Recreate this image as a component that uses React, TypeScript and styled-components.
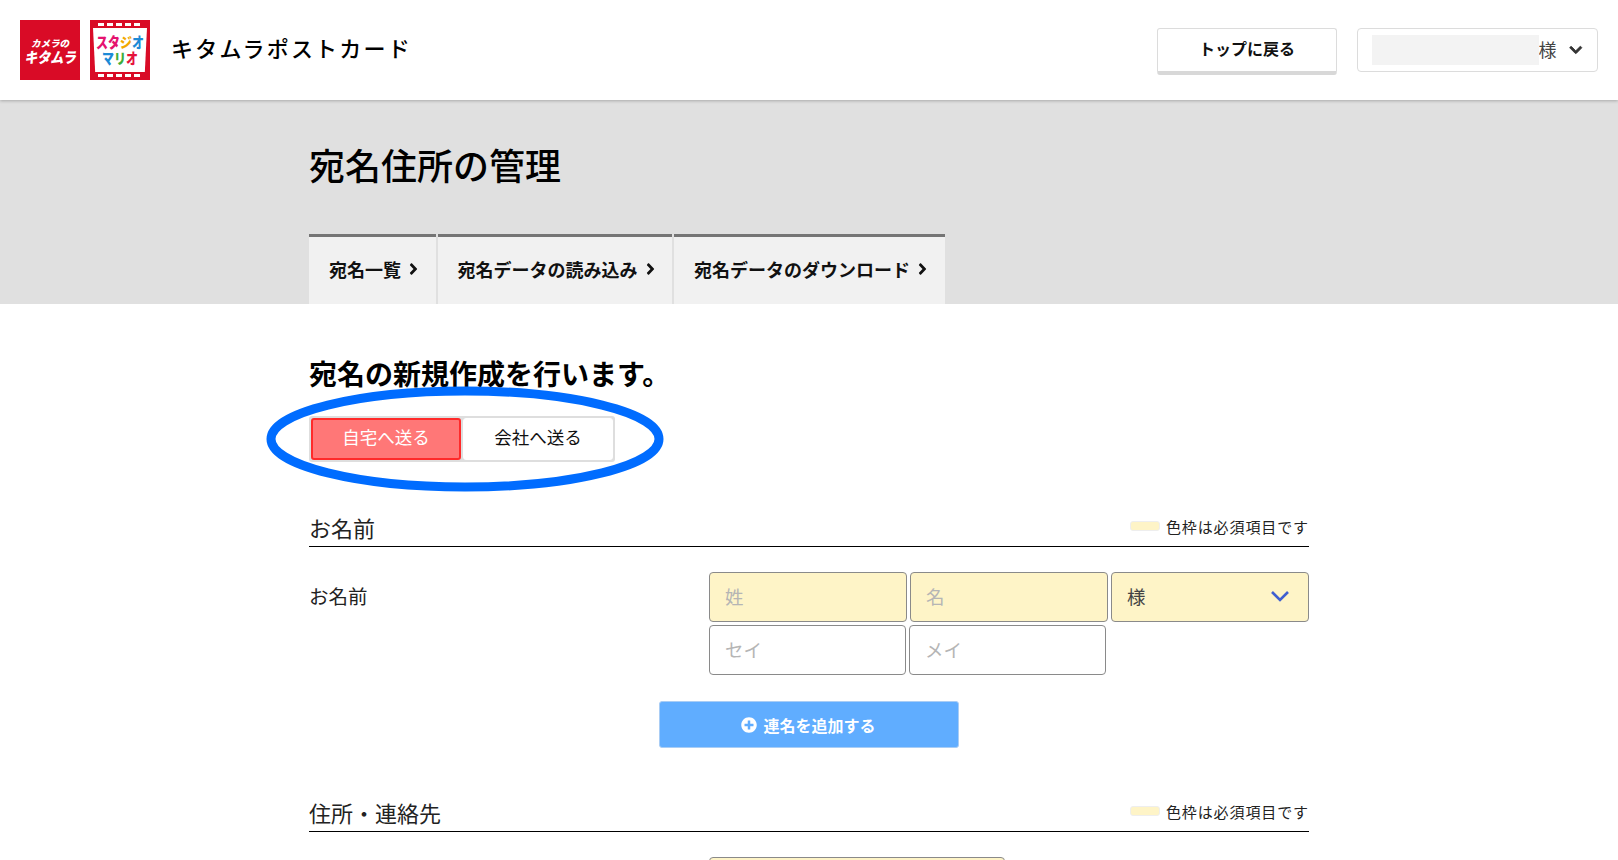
// App.tsx
import React from 'react';
import styled, { createGlobalStyle } from 'styled-components';
import { FaAngleRight, FaChevronDown, FaPlusCircle } from 'react-icons/fa';

// Constants
const COLORS = {
  RED: '#d90b26',
  BAND: '#e0e0e0',
  TAB: '#f1f1f1',
  TAB_TOP: '#757575',
  REQUIRED: '#fef4c7',
  FIELD_BORDER: '#8a8a8a',
  BLUE: '#60adff',
  ANNOTATION: '#006cff'
};

const FONT = '"Noto Sans CJK JP", "Noto Sans", sans-serif';

const GlobalStyle = createGlobalStyle`
  html, body {
    margin: 0;
    height: 860px;
    overflow: hidden;
    background: #fff;
    color: #000;
    font-family: ${FONT};
  }
  * { box-sizing: border-box; }
`;

// Header
const Header = styled.header`
  position: relative;
  z-index: 1;
  height: 100px;
  padding: 20px;
  display: flex;
  align-items: center;
  background: #fff;
  box-shadow: 0 1px 3px rgba(0, 0, 0, 0.25);
`;

const KitamuraLogo = styled.div`
  width: 60px;
  height: 60px;
  padding-top: 2px;
  background: ${COLORS.RED};
  color: #fff;
  display: flex;
  flex-direction: column;
  align-items: center;
  justify-content: center;
  font-weight: 900;
  font-style: italic;
`;

const LogoSmall = styled.span`
  font-size: 9.5px;
  line-height: 12px;
`;

const LogoLarge = styled.span`
  display: block;
  font-size: 13px;
  line-height: 16px;
  transform: scaleY(1.15);
`;

const MarioLogo = styled.div`
  width: 60px;
  height: 60px;
  margin-left: 10px;
  background: ${COLORS.RED};
  padding: 8px 3px;
  position: relative;
  display: flex;
`;

const Perforation = styled.div<{ $side: 'top' | 'bottom' }>`
  position: absolute;
  left: 8px;
  right: 8px;
  ${p => (p.$side === 'top' ? 'top: 3px;' : 'bottom: 3px;')}
  height: 3px;
  background: repeating-linear-gradient(90deg, #fff 0 6px, transparent 6px 9px);
`;

const MarioInner = styled.div`
  flex: 1;
  background: #fff;
  clip-path: polygon(0 0, 100% 0, 96% 100%, 4% 100%);
  display: flex;
  flex-direction: column;
  align-items: center;
  justify-content: center;
  font-weight: 900;
  font-size: 12px;
  line-height: 16px;
`;

const MarioLine = styled.div`
  display: flex;
`;

const MarioChar = styled.span<{ $color: string }>`
  display: block;
  color: ${p => p.$color};
  transform: scaleY(1.2);
`;

const SiteName = styled.div`
  margin-left: 21px;
  padding-bottom: 6px;
  font-size: 22px;
  font-weight: 500;
  letter-spacing: 2.2px;
`;

const HeaderRight = styled.div`
  margin-left: auto;
  display: flex;
  align-items: flex-start;
  gap: 20px;
  padding-top: 3px;
`;

const TopButton = styled.button`
  width: 180px;
  height: 47px;
  padding: 0 0 4px;
  background: #fff;
  border: 1px solid #dcdcdc;
  border-bottom: 4px solid #d8d8d8;
  border-radius: 3px;
  font-family: ${FONT};
  font-size: 16px;
  font-weight: 700;
  color: #111;
`;

const UserMenu = styled.div`
  width: 241px;
  height: 44px;
  padding: 0 14px;
  border: 1px solid #dcdcdc;
  border-radius: 4px;
  display: flex;
  align-items: center;
  color: #444;
`;

const MaskedName = styled.div`
  position: relative;
  z-index: 1;
  width: 173px;
  height: 30px;
  background: #f3f3f3;
`;

const UserSuffix = styled.span`
  margin-left: -1px;
  padding-bottom: 3px;
  font-size: 18px;
`;

const UserChevron = styled(FaChevronDown)`
  margin-left: 13px;
  width: 14px;
  height: 14px;
  color: #333;
  stroke: currentColor;
  stroke-width: 30;
`;

// Grey band
const Band = styled.section`
  height: 204px;
  background: ${COLORS.BAND};
  display: flex;
  flex-direction: column;
  justify-content: space-between;
`;

const Container = styled.div`
  width: 1000px;
  margin: 0 auto;
`;

const PageTitle = styled.h1`
  margin: 37px 0 0;
  font-size: 36px;
  line-height: 54px;
  font-weight: 500;
`;

const Tabs = styled.nav`
  display: flex;
  gap: 2px;
`;

const Tab = styled.a`
  height: 70px;
  padding: 0 15.5px 4px 20px;
  display: flex;
  align-items: center;
  gap: 6px;
  background: ${COLORS.TAB};
  border-top: 3px solid ${COLORS.TAB_TOP};
  font-size: 18px;
  font-weight: 700;
  color: #111;
`;

const TabArrow = styled(FaAngleRight)`
  width: 13px;
  height: 18px;
`;

// Form
const Heading = styled.h2`
  margin: 48px 0 0;
  font-size: 28px;
  line-height: 42px;
  font-weight: 700;
`;

const SendGroup = styled.div`
  position: relative;
  display: flex;
  width: max-content;
  margin: 22px 0 0;
  padding: 2px;
  gap: 2px;
  background: #dedede;
  border-radius: 3px;
`;

const SendButton = styled.button<{ $active?: boolean }>`
  width: 150px;
  height: 42px;
  padding: 0 0 5px;
  border-radius: 3px;
  border: ${p => (p.$active ? '2px solid #ff2a2a' : '1px solid #fff')};
  background: ${p => (p.$active ? '#ff7777' : '#fff')};
  color: ${p => (p.$active ? '#fff' : '#111')};
  font-family: ${FONT};
  font-size: 17.5px;
`;

const Annotation = styled.svg`
  position: absolute;
  left: -43px;
  top: -30px;
  width: 398px;
  height: 106px;
  pointer-events: none;
`;

const SectionHeader = styled.div<{ $first?: boolean }>`
  margin-top: ${p => (p.$first ? '48px' : '47px')};
  height: 37px;
  padding-bottom: 2px;
  display: flex;
  align-items: center;
  justify-content: space-between;
  border-bottom: 1px solid #000;
`;

const SectionTitle = styled.h3`
  margin: 0;
  font-size: 22px;
  font-weight: 400;
  color: #222;
`;

const Legend = styled.div`
  display: flex;
  align-items: center;
  gap: 6px;
  font-size: 15px;
  letter-spacing: 0.9px;
  color: #222;
  margin-bottom: 2px;
`;

const LegendSwatch = styled.span`
  width: 30px;
  height: 10px;
  border-radius: 3px;
  background: ${COLORS.REQUIRED};
  border: 1px solid #eeeeee;
`;

const FormRow = styled.div`
  display: grid;
  grid-template-columns: 400px 600px;
  margin-top: 25px;
`;

const RowLabel = styled.div`
  padding-top: 9px;
  font-size: 19.5px;
  line-height: 30px;
  color: #222;
`;

const Fields = styled.div`
  display: flex;
  flex-direction: column;
  gap: 3px;
`;

const FieldLine = styled.div`
  display: flex;
  gap: 3px;
`;

const Field = styled.div<{ $required?: boolean; $width: number }>`
  width: ${p => p.$width}px;
  height: 50px;
  padding: 0 15px 2px;
  display: flex;
  align-items: center;
  justify-content: space-between;
  border: 1px solid ${COLORS.FIELD_BORDER};
  border-radius: 4px;
  background: ${p => (p.$required ? COLORS.REQUIRED : '#fff')};
  font-size: 18.5px;
`;

const Placeholder = styled.span`
  color: #b5b5b5;
`;

const SelectValue = styled.span`
  color: #444;
`;

const SelectArrow = styled.svg`
  width: 20px;
  height: 12px;
  margin-right: 3px;
  fill: none;
  stroke: #3f5fd0;
  stroke-width: 2.6;
`;

const AddButtonRow = styled.div`
  display: flex;
  justify-content: center;
  margin-top: 26px;
`;

const AddButton = styled.button`
  width: 300px;
  height: 47px;
  margin-left: -1px;
  display: flex;
  align-items: center;
  justify-content: center;
  gap: 6px;
  border: 1px solid #a9cdf5;
  border-radius: 3px;
  background: ${COLORS.BLUE};
  color: #fff;
  font-family: ${FONT};
  font-size: 16px;
  font-weight: 700;
`;

const AddIcon = styled(FaPlusCircle)`
  width: 16px;
  height: 16px;
`;

const PostalSpacer = styled.div``;

const PostalField = styled.div`
  width: 296px;
  height: 50px;
  border: 1px solid ${COLORS.FIELD_BORDER};
  border-radius: 4px;
  background: ${COLORS.REQUIRED};
`;

// Data
const tabs = ['宛名一覧', '宛名データの読み込み', '宛名データのダウンロード'];

const marioTop = [
  { char: 'ス', color: '#e5126f' },
  { char: 'タ', color: '#e5126f' },
  { char: 'ジ', color: '#f2a900' },
  { char: 'オ', color: '#1c8ad6' }
];

const marioBottom = [
  { char: 'マ', color: '#1c8ad6' },
  { char: 'リ', color: '#3fae3a' },
  { char: 'オ', color: '#e5123c' }
];

// Component
const App: React.FC = () => {
  return (
    <>
      <GlobalStyle />
      <Header>
        <KitamuraLogo>
          <LogoSmall>カメラの</LogoSmall>
          <LogoLarge>キタムラ</LogoLarge>
        </KitamuraLogo>
        <MarioLogo>
          <Perforation $side="top" />
          <MarioInner>
            <MarioLine>
              {marioTop.map((item, index) => (
                <MarioChar key={index} $color={item.color}>{item.char}</MarioChar>
              ))}
            </MarioLine>
            <MarioLine>
              {marioBottom.map((item, index) => (
                <MarioChar key={index} $color={item.color}>{item.char}</MarioChar>
              ))}
            </MarioLine>
          </MarioInner>
          <Perforation $side="bottom" />
        </MarioLogo>
        <SiteName>キタムラポストカード</SiteName>
        <HeaderRight>
          <TopButton>トップに戻る</TopButton>
          <UserMenu>
            <MaskedName />
            <UserSuffix>様</UserSuffix>
            <UserChevron />
          </UserMenu>
        </HeaderRight>
      </Header>

      <Band>
        <Container>
          <PageTitle>宛名住所の管理</PageTitle>
        </Container>
        <Container>
          <Tabs>
            {tabs.map(tab => (
              <Tab key={tab}>
                {tab}
                <TabArrow />
              </Tab>
            ))}
          </Tabs>
        </Container>
      </Band>

      <Container>
        <Heading>宛名の新規作成を行います。</Heading>
        <SendGroup>
          <SendButton $active>自宅へ送る</SendButton>
          <SendButton>会社へ送る</SendButton>
          <Annotation viewBox="0 0 398 106">
            <ellipse cx="199" cy="53" rx="194" ry="48" fill="none" stroke={COLORS.ANNOTATION} strokeWidth="9" />
          </Annotation>
        </SendGroup>

        <SectionHeader $first>
          <SectionTitle>お名前</SectionTitle>
          <Legend>
            <LegendSwatch />
            色枠は必須項目です
          </Legend>
        </SectionHeader>
        <FormRow>
          <RowLabel>お名前</RowLabel>
          <Fields>
            <FieldLine>
              <Field $required $width={198}><Placeholder>姓</Placeholder></Field>
              <Field $required $width={198}><Placeholder>名</Placeholder></Field>
              <Field $required $width={198}>
                <SelectValue>様</SelectValue>
                <SelectArrow viewBox="0 0 20 12">
                  <polyline points="2,2 10,10 18,2" />
                </SelectArrow>
              </Field>
            </FieldLine>
            <FieldLine>
              <Field $width={197}><Placeholder>セイ</Placeholder></Field>
              <Field $width={197}><Placeholder>メイ</Placeholder></Field>
            </FieldLine>
          </Fields>
        </FormRow>
        <AddButtonRow>
          <AddButton>
            <AddIcon />
            連名を追加する
          </AddButton>
        </AddButtonRow>

        <SectionHeader>
          <SectionTitle>住所・連絡先</SectionTitle>
          <Legend>
            <LegendSwatch />
            色枠は必須項目です
          </Legend>
        </SectionHeader>
        <FormRow>
          <PostalSpacer />
          <PostalField />
        </FormRow>
      </Container>
    </>
  );
};

export default App;
